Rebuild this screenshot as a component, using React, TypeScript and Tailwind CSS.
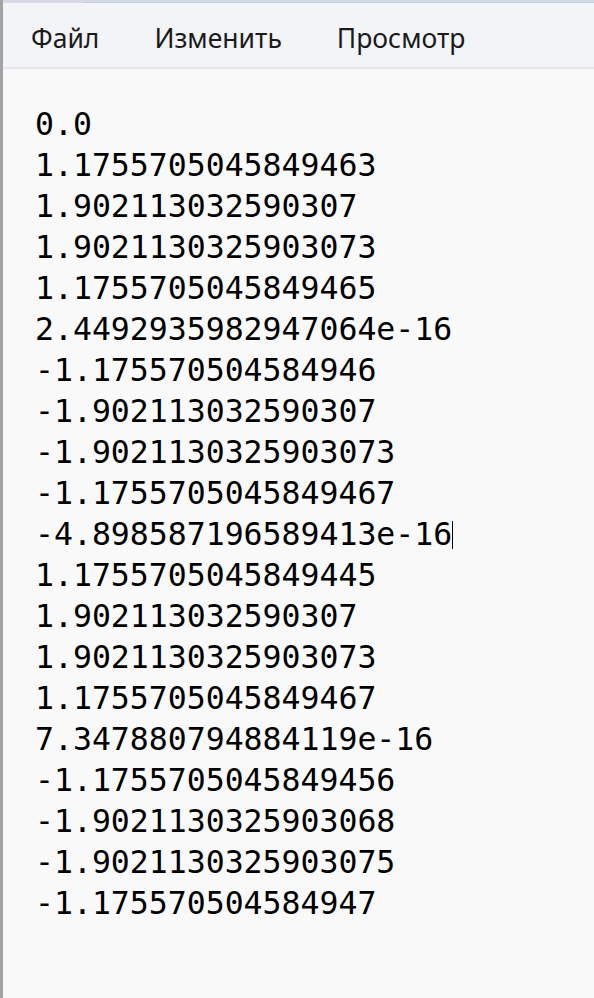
import React from "react";

const lines = [
  "0.0",
  "1.1755705045849463",
  "1.902113032590307",
  "1.9021130325903073",
  "1.1755705045849465",
  "2.4492935982947064e-16",
  "-1.175570504584946",
  "-1.902113032590307",
  "-1.9021130325903073",
  "-1.1755705045849467",
  "-4.898587196589413e-16",
  "1.1755705045849445",
  "1.902113032590307",
  "1.9021130325903073",
  "1.1755705045849467",
  "7.347880794884119e-16",
  "-1.1755705045849456",
  "-1.9021130325903068",
  "-1.9021130325903075",
  "-1.175570504584947",
];

export default function App() {
  return (
    <div className="w-[594px] h-[998px] flex overflow-hidden bg-[#f9f9f9]">
      <div className="w-[3px] h-full bg-[#a3a3a3] shrink-0" />
      <div className="flex-1 flex flex-col min-w-0">
        <div className="h-[3px] bg-[#d3d9e5] flex">
          <div className="w-[80px]" />
          <div className="flex-1 flex flex-col">
            <div className="h-[2px]" />
            <div className="h-[1px] bg-[#c6cdda]" />
          </div>
        </div>
        <div className="h-[66px] bg-[#f3f4f8] border-b-2 border-[#e6e7ea] flex items-center pl-[28px] gap-[55px] text-[26.5px] text-[#1b1b1b] font-['Noto_Sans',sans-serif] pt-[8px]">
          <span>Файл</span>
          <span>Изменить</span>
          <span>Просмотр</span>
        </div>
        <div className="flex-1 pt-[35px] pl-[32px] font-['DejaVu_Sans_Mono',monospace] text-[31.5px] leading-[41px] text-black">
          {lines.map((l, i) => (
            <div key={i} className="flex items-center">
              <span>{l}</span>
              {i === 10 && <span className="inline-block w-[1px] h-[28px] bg-black ml-[0px]" />}
            </div>
          ))}
        </div>
      </div>
    </div>
  );
}
